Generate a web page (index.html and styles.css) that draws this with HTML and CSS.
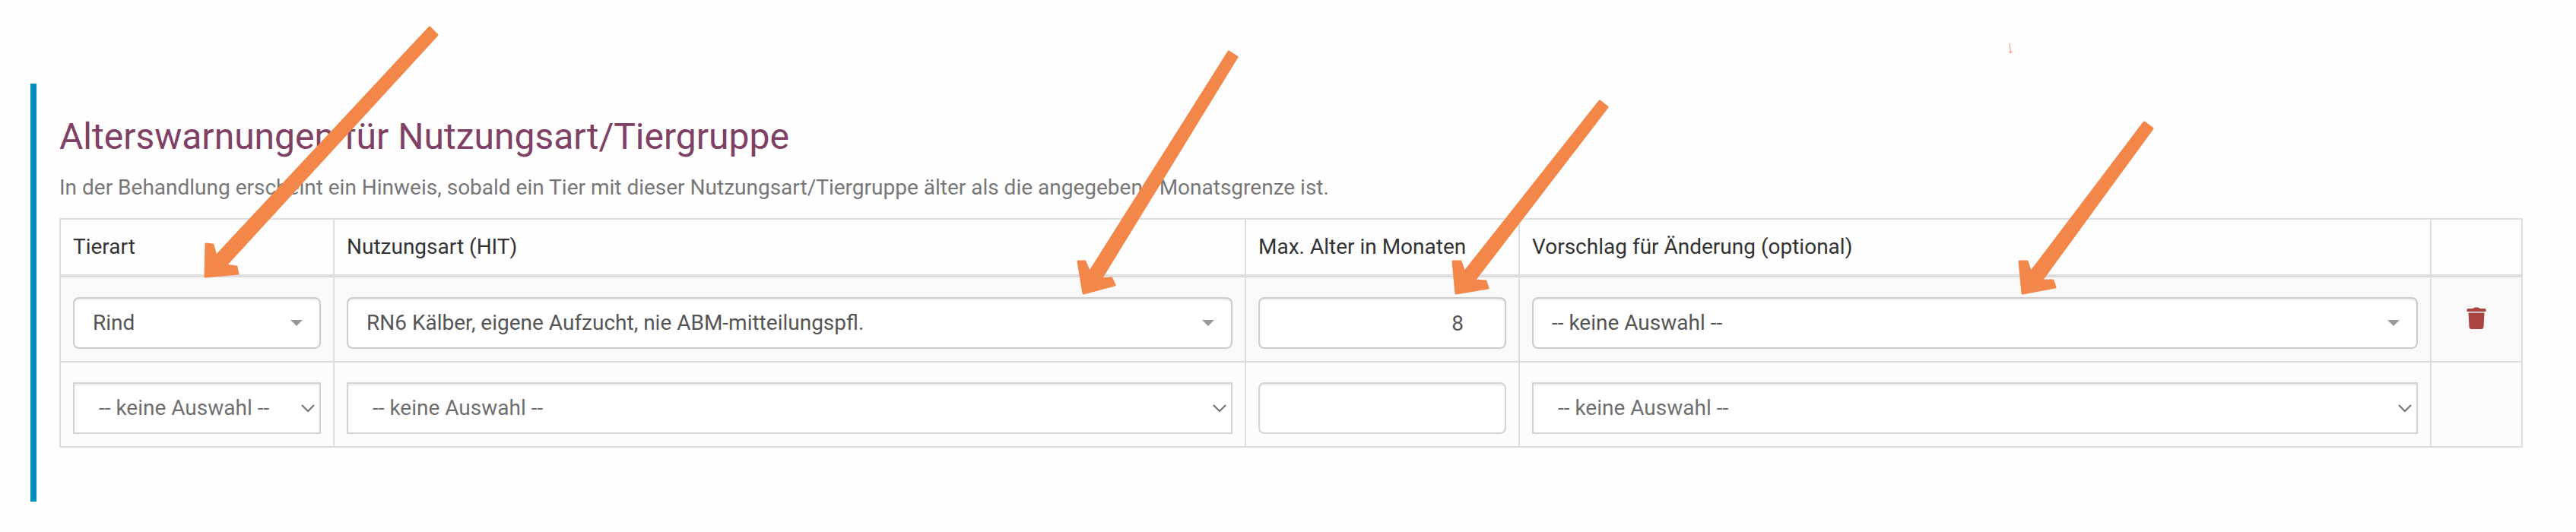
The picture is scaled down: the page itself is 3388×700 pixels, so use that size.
FILE: index.html
```html
<!DOCTYPE html>
<html lang="de">
<head>
    <meta charset="UTF-8">
    <meta name="viewport" content="width=device-width, initial-scale=1.0">
    <title>Alterswarnungen</title>
    <link rel="stylesheet" href="styles.css">
</head>
<body>
    <section class="panel">
        <h2>Alterswarnungen für Nutzungsart/Tiergruppe</h2>
        <p class="help">In der Behandlung erscheint ein Hinweis, sobald ein Tier mit dieser Nutzungsart/Tiergruppe älter als die angegebene Monatsgrenze ist.</p>
        <table>
            <colgroup>
                <col class="col-small">
                <col>
                <col class="col-small">
                <col>
                <col class="col-action">
            </colgroup>
            <thead>
                <tr>
                    <th id="thTierart">Tierart</th>
                    <th id="thNutzungsart">Nutzungsart (HIT)</th>
                    <th id="thAlter">Max. Alter in Monaten</th>
                    <th id="thVorschlag">Vorschlag für Änderung (optional)</th>
                    <th></th>
                </tr>
            </thead>
            <tbody>
                <tr>
                    <td>
                        <select class="control" name="tierart" aria-labelledby="thTierart">
                            <option>Rind</option>
                        </select>
                    </td>
                    <td>
                        <select class="control" name="nutzungsart" aria-labelledby="thNutzungsart">
                            <option>RN6 Kälber, eigene Aufzucht, nie ABM-mitteilungspfl.</option>
                        </select>
                    </td>
                    <td><input class="control" type="number" name="alter" value="8" aria-labelledby="thAlter"></td>
                    <td>
                        <select class="control" name="vorschlag" aria-labelledby="thVorschlag">
                            <option>-- keine Auswahl --</option>
                        </select>
                    </td>
                    <td class="action">
                        <button type="button" class="delete" aria-label="Löschen">
                            <svg width="26" height="32" viewBox="0 0 26 32" fill="currentColor">
                                <path d="M2 2h6.500q1-1.500 2.500-1.500h4q1.500 0 2.500 1.500H24q1.500 0 1.500 1.500V6H.5V3.500Q.5 2 2 2z"/>
                                <path d="M2.500 7.500h21l-1 18.500q-.2 3-3 3h-13q-2.800 0-3-3z"/>
                            </svg>
                        </button>
                    </td>
                </tr>
                <tr class="new-row">
                    <td>
                        <select class="control" name="tierartNeu" aria-labelledby="thTierart">
                            <option>-- keine Auswahl --</option>
                        </select>
                    </td>
                    <td>
                        <select class="control" name="nutzungsartNeu" aria-labelledby="thNutzungsart">
                            <option>-- keine Auswahl --</option>
                        </select>
                    </td>
                    <td><input class="control" type="number" name="alterNeu" aria-labelledby="thAlter"></td>
                    <td>
                        <select class="control" name="vorschlagNeu" aria-labelledby="thVorschlag">
                            <option>-- keine Auswahl --</option>
                        </select>
                    </td>
                    <td></td>
                </tr>
            </tbody>
        </table>
    </section>

    <!-- arrows pointing at the four fields -->
    <svg class="arrows" width="2900" height="400" viewBox="0 0 2900 400" aria-hidden="true">
        <path d="M565 36L575 46L297 349L311 351L313 360L270 364L271 321L280 322L284 337z"/>
        <path d="M1616 68L1627 75L1448 367L1462 366L1466 375L1425 386L1418 344L1427 344L1433 358z"/>
        <path d="M2104 133L2114 141L1939 369L1954 370L1957 379L1915 386L1911 344L1921 344L1926 358z"/>
        <path d="M2820 161L2831 169L2685 369L2700 369L2703 378L2660 386L2656 344L2666 344L2671 358z"/>
        <path class="thin" d="M2643 57L2644.500 69M2642.500 68.500L2644.500 69.500L2646.500 68"/>
    </svg>
</body>
</html>
```

FILE: styles.css
```css
* {
    box-sizing: border-box;
}
body {
    margin: 0;
    padding: 110px 70px 40px 40px;
    background-color: #fefefe;
    color: #333;
    font-family: Roboto, sans-serif;
    font-size: 28px;
    line-height: 40px;
}
.panel {
    padding: 42px 0 71px 30px;
    border-left: 8px solid #008dbd;
}
h2 {
    margin: 0 0 19px;
    color: #7f4064;
    font-size: 48px;
    font-weight: 400;
    line-height: 56px;
}
.help {
    margin: 0 0 20px;
    color: #777;
}
table {
    width: 100%;
    table-layout: fixed;
    border-collapse: collapse;
}
.col-small {
    width: 360px;
}
.col-action {
    width: 120px;
}
th, td {
    padding: 16px;
    border: 2px solid #ddd;
    text-align: left;
}
th {
    border-bottom-width: 4px;
    font-weight: 400;
}
td {
    padding-top: 26px;
    background-color: #f9f9f9;
}
.new-row td {
    background-color: #fcfcfc;
}
.control {
    display: block;
    width: 100%;
    height: 68px;
    margin: 0;
    padding: 0 56px 0 24px;
    border: 2px solid #ccc;
    border-radius: 8px;
    background-color: #fff;
    box-shadow: inset 0 2px 2px rgba(0, 0, 0, 0.075);
    color: #555;
    font: inherit;
    appearance: none;
}
select.control {
    background-image: url("data:image/svg+xml,%3Csvg xmlns='http://www.w3.org/2000/svg' width='16' height='8'%3E%3Cpath d='M0 0h16L8 8z' fill='%23999'/%3E%3C/svg%3E");
    background-repeat: no-repeat;
    background-position: right 22px center;
}
input.control {
    padding-right: 54px;
    text-align: right;
    appearance: textfield;
}
/* no room kept for the spinner */
input.control::-webkit-inner-spin-button {
    margin: 0;
    appearance: none;
}
.new-row .control {
    border-color: #d3d3d3;
    color: #6f6f6f;
}
.new-row select.control {
    padding-left: 32px;
    padding-right: 30px;
    border-radius: 0;
    background-image: url("data:image/svg+xml,%3Csvg xmlns='http://www.w3.org/2000/svg' width='18' height='11'%3E%3Cpath d='M1 1l8 8 8-8' fill='none' stroke='%23707070' stroke-width='2'/%3E%3C/svg%3E");
    background-position: right 6px center;
}
.action {
    padding: 16px;
    vertical-align: middle;
}
.delete {
    display: block;
    margin: 0 auto;
    padding: 0;
    border: none;
    background: none;
    color: #a94442;
    cursor: pointer;
}
.delete svg {
    display: block;
}
.arrows {
    position: absolute;
    top: 0;
    left: 0;
    fill: #f3874a;
    stroke: #f3874a;
    stroke-width: 3;
    stroke-linejoin: round;
    pointer-events: none;
}
.arrows .thin {
    fill: none;
    stroke-width: 1;
}
```
